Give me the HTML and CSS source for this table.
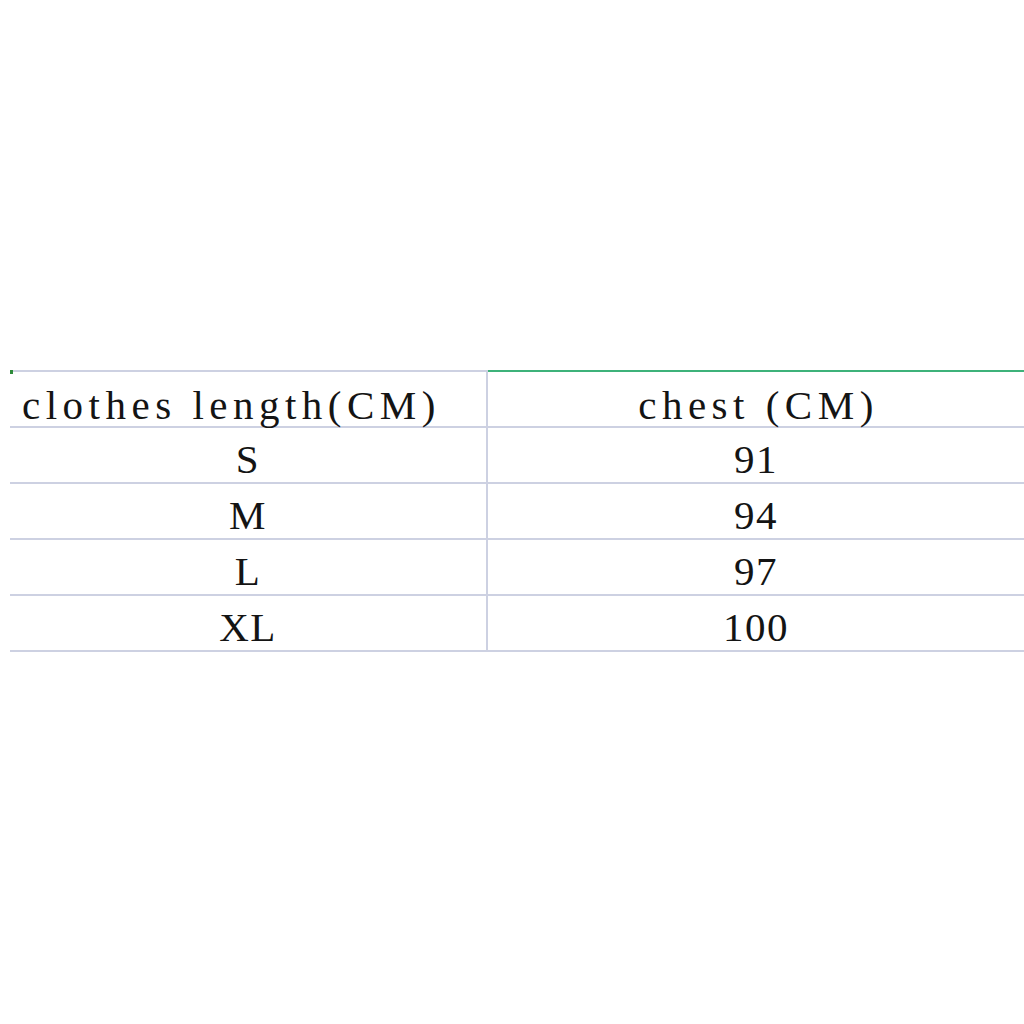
FILE: index.html
```html
<!DOCTYPE html>
<html>
<head>
<meta charset="utf-8">
<link rel="stylesheet" href="styles.css">
</head>
<body>
<div class="page">
  <div class="sheet">
    <div class="marker"></div>
    <div class="cell head left first">clothes length(CM)</div>
    <div class="cell head green">chest (CM)</div>
    <div class="cell first">S</div>
    <div class="cell">91</div>
    <div class="cell first">M</div>
    <div class="cell">94</div>
    <div class="cell first">L</div>
    <div class="cell">97</div>
    <div class="cell first">XL</div>
    <div class="cell">100</div>
  </div>
</div>
</body>
</html>
```

FILE: styles.css
```css
html, body {
  margin: 0;
  padding: 0;
  background: #ffffff;
}
.page {
  width: 1024px;
  height: 1024px;
  padding-top: 370px;
  padding-left: 10px;
  box-sizing: border-box;
  overflow: hidden;
}
.sheet {
  position: relative;
  display: grid;
  grid-template-columns: 478px 536px;
  grid-auto-rows: 56px;
  border-top: 2px solid #cdd1e2;
}
.marker {
  position: absolute;
  left: 0;
  top: -2px;
  width: 3px;
  height: 4px;
  background: #2e8b3a;
}
.cell {
  font-family: "Liberation Serif", serif;
  font-size: 41px;
  color: #141414;
  display: flex;
  align-items: flex-end;
  justify-content: center;
  padding-bottom: 2px;
  box-sizing: border-box;
  border-bottom: 2px solid #cdd1e2;
  line-height: 1;
  white-space: pre;
  letter-spacing: 1.5px;
}
.cell.first {
  border-right: 2px solid #cdd1e2;
}
.cell.head {
  padding-bottom: 0;
  letter-spacing: 5.5px;
}
.cell.head.left {
  justify-content: flex-start;
  padding-left: 12px;
}
.cell.green {
  margin-top: -2px;
  border-top: 2px solid #3db27a;
  height: 58px;
  padding-left: 5px;
}
```
